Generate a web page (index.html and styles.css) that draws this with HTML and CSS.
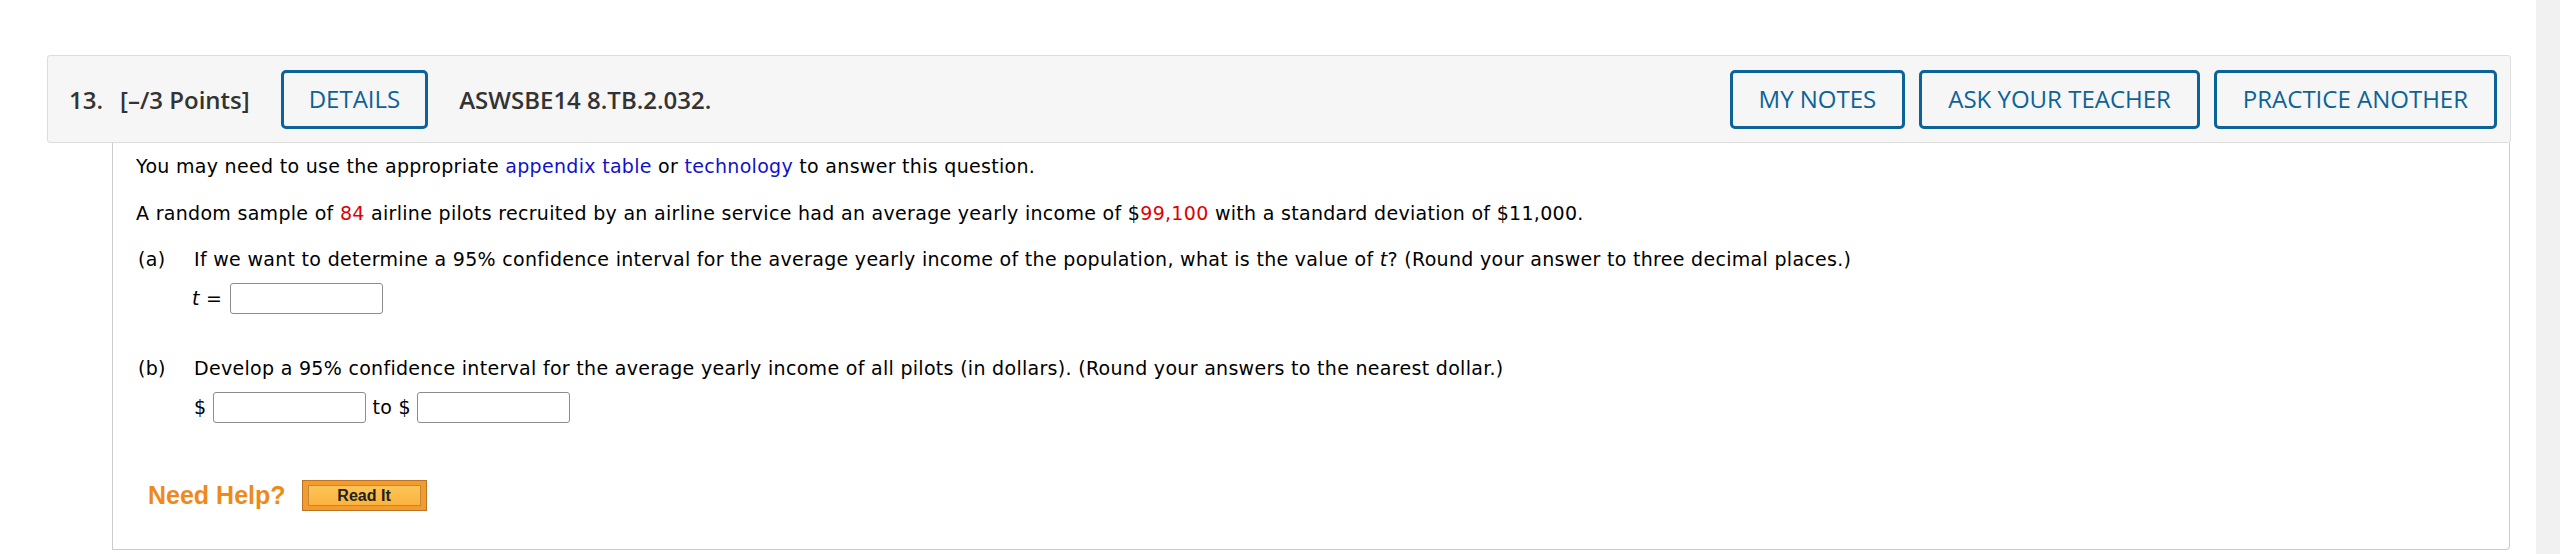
FILE: index.html
```html
<!DOCTYPE html>
<html lang="en">
<head>
<meta charset="utf-8">
<title>Question 13</title>
<link rel="stylesheet" href="styles.css">
</head>
<body>
<div class="page">
  <main class="main">
    <section class="question">
      <header class="qhead">
        <span class="qnum">13.</span>
        <span class="qpts">[–/3 Points]</span>
        <button class="btn">DETAILS</button>
        <span class="qid">ASWSBE14 8.TB.2.032.</span>
        <div class="qactions">
          <button class="btn">MY NOTES</button>
          <button class="btn">ASK YOUR TEACHER</button>
          <button class="btn">PRACTICE ANOTHER</button>
        </div>
      </header>
      <div class="qbody">
        <p class="line">You may need to use the appropriate <a class="link" href="#">appendix table</a> or <a class="link" href="#">technology</a> to answer this question.</p>
        <p class="line gap-p">A random sample of <span class="red">84</span> airline pilots recruited by an airline service had an average yearly income of $<span class="red">99,100</span> with a standard deviation of $11,000.</p>
        <div class="part part-a">
          <span class="plabel">(a)</span>
          <div class="pcontent">
            <p class="line">If we want to determine a 95% confidence interval for the average yearly income of the population, what is the value of <i>t</i>? (Round your answer to three decimal places.)</p>
            <div class="answer">
              <span class="lhs"><i>t</i> =</span>
              <input class="box" type="text">
            </div>
          </div>
        </div>
        <div class="part part-b">
          <span class="plabel">(b)</span>
          <div class="pcontent">
            <p class="line">Develop a 95% confidence interval for the average yearly income of all pilots (in dollars). (Round your answers to the nearest dollar.)</p>
            <div class="answer">
              <span class="cur">$</span>
              <input class="box" type="text">
              <span class="to">to $</span>
              <input class="box" type="text">
            </div>
          </div>
        </div>
        <div class="help">
          <span class="need">Need Help?</span>
          <span class="readit"><span class="readit-in">Read It</span></span>
        </div>
      </div>
    </section>
  </main>
  <div class="track"></div>
</div>
</body>
</html>
```
FILE: styles.css
```css
html, body {
  margin: 0;
  padding: 0;
  background: #ffffff;
}

.page {
  display: flex;
  min-height: 554px;
}

.main {
  flex: 1;
  padding: 55px 25px 0 47px;
}

.track {
  width: 24px;
  background: #f1f1f1;
}

.qhead {
  display: flex;
  align-items: center;
  height: 88px;
  box-sizing: border-box;
  background: #f6f6f6;
  border: 1px solid #dddddd;
  border-radius: 3px;
  padding: 0 13px 0 21px;
  font-family: "Open Sans", "Liberation Sans", sans-serif;
  font-size: 24px;
  color: #333333;
}

.qnum {
  font-weight: 600;
  margin-right: 17px;
}

.qpts {
  font-weight: 600;
  margin-right: 31px;
}

.qid {
  font-weight: 600;
  margin-left: 31px;
}

.btn {
  height: 59px;
  box-sizing: border-box;
  padding: 0 25px;
  border: 3px solid #0b6399;
  border-radius: 5px;
  background: transparent;
  color: #0b6399;
  font-family: "Open Sans", "Liberation Sans", sans-serif;
  font-size: 24px;
  font-weight: 400;
  line-height: 1;
}

.qactions {
  margin-left: auto;
  display: flex;
  gap: 14px;
}

.qactions .btn {
  padding: 0 26px;
}

.qbody {
  margin: 0 1px 0 65px;
  border: 1px solid #cccccc;
  border-top: none;
  border-radius: 0 0 4px 0;
  padding: 10px 0 38px 23px;
  font-family: "DejaVu Sans", Verdana, sans-serif;
  font-size: 19px;
  letter-spacing: 0.3px;
  line-height: 27px;
  color: #000000;
}

.line {
  margin: 0;
}

.gap-p {
  margin-top: 20px;
}

.link {
  color: #1111cc;
  text-decoration: none;
}

.red {
  color: #e00000;
}

.part {
  display: flex;
}

.part-a {
  margin-top: 19px;
}

.part-b {
  margin-top: 41px;
}

.plabel {
  width: 56px;
  padding-left: 2px;
  flex: none;
}

.pcontent {
  flex: 1;
}

.answer {
  display: flex;
  align-items: center;
  height: 31px;
  margin-top: 10px;
}

.lhs {
  margin-left: -2px;
  margin-right: 8px;
}

.cur {
  margin-right: 7px;
}

.to {
  margin: 0 6px;
}

.box {
  width: 153px;
  height: 31px;
  box-sizing: border-box;
  border: 1px solid #8c8c8c;
  border-radius: 3px;
  background: #ffffff;
  margin: 0;
  padding: 0 4px;
}

.help {
  display: flex;
  align-items: center;
  margin-top: 57px;
  margin-left: 12px;
  height: 31px;
}

.need {
  font-family: "Liberation Sans", Arial, sans-serif;
  font-weight: 700;
  font-size: 25px;
  letter-spacing: 0;
  color: #ee8a1b;
  margin-right: 16px;
}

.readit {
  display: flex;
  width: 125px;
  height: 31px;
  box-sizing: border-box;
  border: 1px solid #b8742a;
  background: #f39c2d;
  padding: 4px 5px;
}

.readit-in {
  flex: 1;
  display: flex;
  align-items: center;
  justify-content: center;
  border: 1px solid #c5863a;
  background: linear-gradient(#fdc457, #fbb33d);
  font-family: "Liberation Sans", Arial, sans-serif;
  font-weight: 700;
  font-size: 16px;
  letter-spacing: 0;
  color: #222222;
}
```
